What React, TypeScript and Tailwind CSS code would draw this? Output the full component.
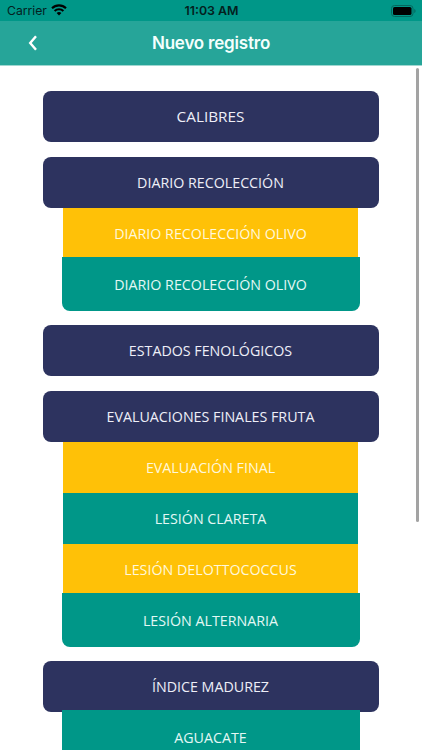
import React from "react";
import clsx from "clsx";

type Tone = "yellow" | "green";

interface Item {
    label: string;
    tone: Tone;
}

interface Group {
    title: string;
    large?: boolean;
    items: Item[];
}

const groups: Group[] = [
    { title: "CALIBRES", large: true, items: [] },
    {
        title: "DIARIO RECOLECCIÓN",
        items: [
            { label: "DIARIO RECOLECCIÓN OLIVO", tone: "yellow" },
            { label: "DIARIO RECOLECCIÓN OLIVO", tone: "green" },
        ],
    },
    { title: "ESTADOS FENOLÓGICOS", items: [] },
    {
        title: "EVALUACIONES FINALES FRUTA",
        items: [
            { label: "EVALUACIÓN FINAL", tone: "yellow" },
            { label: "LESIÓN CLARETA", tone: "green" },
            { label: "LESIÓN DELOTTOCOCCUS", tone: "yellow" },
            { label: "LESIÓN ALTERNARIA", tone: "green" },
        ],
    },
    { title: "ÍNDICE MADUREZ", items: [{ label: "AGUACATE", tone: "green" }] },
];

const StatusBar: React.FC = () => (
    <div className="grid h-[21px] shrink-0 grid-cols-3 items-center bg-[#009788] pl-[7px] pr-1.5 text-black">
        <div className="flex items-center gap-1">
            <span className="pt-0.5 text-[12.2px] leading-none text-[#04211e]">Carrier</span>
            <svg width="16" height="12" viewBox="0 0 16 12" fill="none" stroke="currentColor" strokeWidth="2.1">
                <path d="M1 4.2a10 10 0 0 1 14 0" />
                <path d="M3.6 7a6.3 6.3 0 0 1 8.8 0" />
                <path d="M8 11.5 5.6 9.1a3.5 3.5 0 0 1 4.8 0z" fill="currentColor" stroke="none" />
            </svg>
        </div>
        <span className="pt-px text-center text-[12.4px] font-semibold leading-none text-[#04211e]">11:03 AM</span>
        <svg className="justify-self-end" width="25" height="12" viewBox="0 0 25 12">
            <rect x="0.5" y="0.5" width="21.5" height="11" rx="3" fill="none" stroke="#04685e" />
            <rect x="2" y="2" width="18.5" height="8" rx="1.6" fill="#000" />
            <path d="M23.3 4v4c.8-.3 1.2-1.1 1.2-2s-.4-1.700-1.200-2z" fill="#04685e" />
        </svg>
    </div>
);

const Header: React.FC = () => (
    <header className="grid h-[45px] shrink-0 grid-cols-[64px_1fr_64px] items-center border-b border-[#a0d7d1] bg-[#26a599] text-white">
        <button className="flex justify-center pl-px" aria-label="Volver">
            <svg width="10" height="16" viewBox="0 0 10 16" fill="none" stroke="currentColor" strokeWidth="2.4">
                <path d="M8 1.200 2.200 8l5.800 6.800" />
            </svg>
        </button>
        <h1 className="text-center text-[17px] font-semibold leading-none tracking-[-0.2px] text-[#f4fffd]">Nuevo registro</h1>
    </header>
);

const GroupCard: React.FC<{ group: Group }> = ({ group }) => (
    <section className={clsx("flex flex-col items-center", group.items.length > 0 ? "mb-3.5" : "mb-[15px]")}>
        <button
            className={clsx(
                "flex h-[51px] w-[336px] items-center justify-center rounded-lg bg-[#2d335f] text-[#eeeff8]",
                group.large ? "text-[15.3px]" : "text-[14.25px]"
            )}
        >
            {group.title}
        </button>
        {group.items.map((item, i) => {
            const last = i === group.items.length - 1;
            return (
                <button
                    key={i}
                    className={clsx(
                        "flex items-center justify-center text-[14.25px]",
                        item.tone === "yellow" ? "bg-[#ffc107] text-[#fff8db]" : "bg-[#009788] text-[#e3f8f5]",
                        last ? "z-10 -mt-0.5 h-[54px] w-[298px] rounded-b-lg pt-px" : "h-[51px] w-[295px]"
                    )}
                >
                    {item.label}
                </button>
            );
        })}
    </section>
);

export default function App() {
    return (
        <div className="flex h-[750px] w-[422px] flex-col overflow-hidden bg-white font-['Inter',sans-serif]">
            <StatusBar />
            <Header />
            <main className="flex min-h-0 flex-1 justify-end overflow-hidden">
                <div className="flex-1 pl-[6px] pr-px pt-[25px] font-['Open_Sans',sans-serif]">
                    {groups.map((group) => (
                        <GroupCard key={group.title} group={group} />
                    ))}
                </div>
                {/* Scroll indicator */}
                <div className="mr-[3px] mt-[2px] h-[454px] w-[3px] rounded-full bg-[#a3a3a3]" />
            </main>
        </div>
    );
}
